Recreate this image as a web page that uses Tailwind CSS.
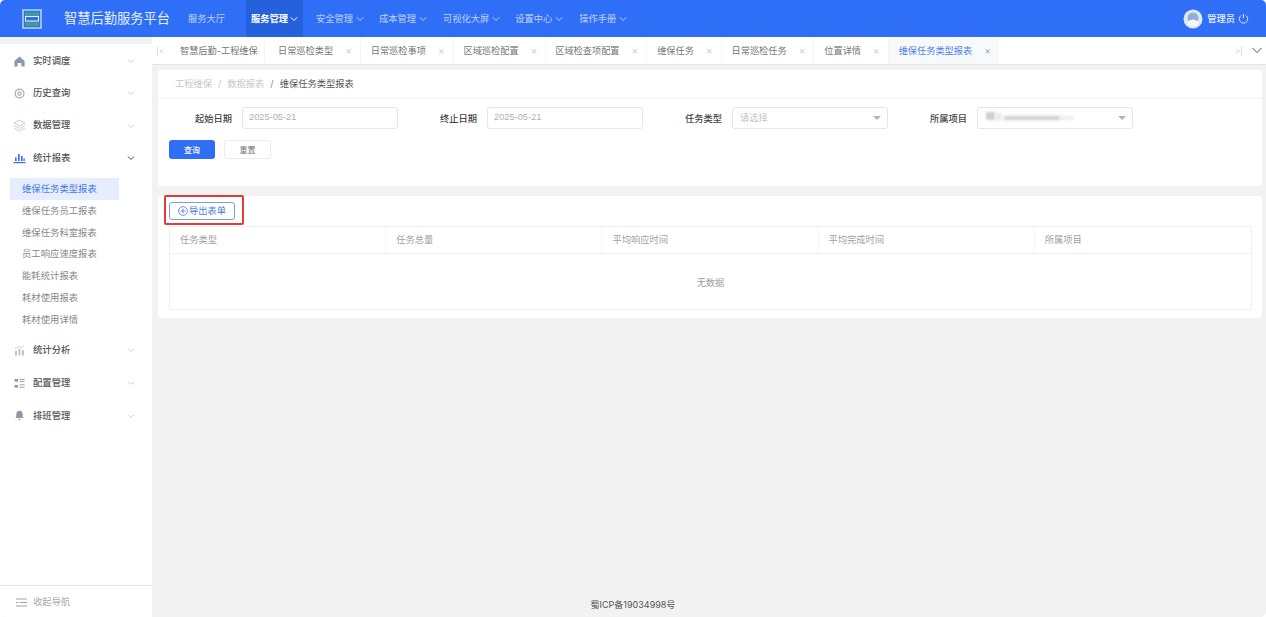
<!DOCTYPE html>
<html lang="en">
<head>
<meta charset="utf-8">
<title>维保任务类型报表</title>
<script src="https://cdn.jsdelivr.net/npm/@tailwindcss/browser@4"></script>
</head>
<body class="bg-white font-['Inter','Noto_Sans_CJK_SC',sans-serif] text-[#333]">
<div class="h-[617px] w-[1266px] overflow-hidden rounded-[5px] flex flex-col bg-[#f2f2f2] relative">

  <!-- top bar -->
  <header class="h-[37px] shrink-0 bg-[#2f6ef7] flex items-center text-white">
    <div class="w-[64px] flex justify-center">
      <svg width="20" height="20" viewBox="0 0 20 20" fill="none" class="ml-[-1px]">
        <rect x="1" y="1" width="18" height="18" stroke="#c9dcdc" stroke-width="1.4"/>
        <rect x="3" y="3" width="14" height="14" fill="#3f9a9a"/>
        <rect x="3.500" y="7.500" width="13" height="4.500" fill="#2f6ef7" stroke="#e8f0ff" stroke-width="1"/>
      </svg>
    </div>
    <div class="w-[124px] text-[13.25px] text-[#e6eeff]">智慧后勤服务平台</div>
    <nav class="flex items-center h-full text-[9.25px] text-white/70">
      <span class="w-[58px]">服务大厅</span>
      <span class="w-[57px] h-full bg-[#2560dd] flex items-center justify-center gap-[2px] font-bold text-white">服务管理
        <svg width="8" height="8" viewBox="0 0 8 8" fill="none" stroke="currentColor"><path d="M.8 2.300 4 5.500l3.200-3.200"/></svg>
      </span>
      <span class="flex items-center gap-[3px] ml-[13px]">安全管理
        <svg width="8" height="8" viewBox="0 0 8 8" fill="none" stroke="currentColor"><path d="M.8 2.300 4 5.500l3.200-3.200"/></svg>
      </span>
      <span class="flex items-center gap-[3px] ml-[15px]">成本管理
        <svg width="8" height="8" viewBox="0 0 8 8" fill="none" stroke="currentColor"><path d="M.8 2.300 4 5.500l3.200-3.200"/></svg>
      </span>
      <span class="flex items-center gap-[3px] ml-[16px]">可视化大屏
        <svg width="8" height="8" viewBox="0 0 8 8" fill="none" stroke="currentColor"><path d="M.8 2.300 4 5.500l3.200-3.200"/></svg>
      </span>
      <span class="flex items-center gap-[3px] ml-[15px]">设置中心
        <svg width="8" height="8" viewBox="0 0 8 8" fill="none" stroke="currentColor"><path d="M.8 2.300 4 5.500l3.200-3.200"/></svg>
      </span>
      <span class="flex items-center gap-[3px] ml-[16px]">操作手册
        <svg width="8" height="8" viewBox="0 0 8 8" fill="none" stroke="currentColor"><path d="M.8 2.300 4 5.500l3.200-3.200"/></svg>
      </span>
    </nav>
    <div class="ml-auto flex items-center pr-[17px]">
      <svg width="20" height="20" viewBox="0 0 20 20" class="mr-[4px]">
        <circle cx="10" cy="10" r="9.500" fill="#dfe8f5"/>
        <circle cx="10" cy="9" r="5.500" fill="#8fb0d8"/>
        <path d="M4 13q6-5 12 0l-2 4H6z" fill="#f4f7fb"/>
      </svg>
      <span class="text-[9.25px] text-white/90 font-medium">管理员</span>
      <svg width="11" height="11" viewBox="0 0 11 11" fill="none" stroke="#e6eeff" stroke-width=".9" class="ml-[3px]">
        <path d="M3.200 2.400a4.200 4.200 0 1 0 4.600 0M5.500 1v4"/>
      </svg>
    </div>
  </header>

  <div class="flex flex-1 min-h-0">
    <!-- side menu -->
    <aside class="w-[152px] shrink-0 flex flex-col mt-[7px] bg-white text-[9.35px]">
      <div class="flex-1 pt-[1px]">
        <div class="h-[32px] flex items-center pl-[14px] pr-[17px] font-medium text-[#555]">
          <svg width="11" height="11" viewBox="0 0 11 11" fill="#8d99a6" class="mr-[8px]"><path d="M5.500.6 10.600 5v5.400H7.400V7H3.600v3.400H.4V5z"/></svg>
          <span>实时调度</span>
          <svg width="8" height="8" viewBox="0 0 8 8" fill="none" stroke="#d4d4d4" class="ml-auto"><path d="M.8 2.600 4 5.400l3.200-2.800"/></svg>
        </div>
        <div class="h-[32px] flex items-center pl-[14px] pr-[17px] font-medium text-[#555]">
          <svg width="11" height="11" viewBox="0 0 11 11" fill="none" stroke="#a4aeb6" stroke-width="1.200" class="mr-[8px]"><circle cx="5.500" cy="5.500" r="4.400"/><circle cx="5.500" cy="5.500" r="1.600"/></svg>
          <span>历史查询</span>
          <svg width="8" height="8" viewBox="0 0 8 8" fill="none" stroke="#d4d4d4" class="ml-auto"><path d="M.8 2.600 4 5.400l3.200-2.800"/></svg>
        </div>
        <div class="h-[33px] flex items-center pl-[13px] pr-[17px] font-medium text-[#555]">
          <svg width="13" height="13" viewBox="0 0 13 13" fill="none" stroke="#bcc4ca" stroke-width=".8" class="mr-[7px]"><path d="M6.500 1 12 4 6.500 7 1 4zM1 6.500l5.500 3 5.500-3M1 9l5.500 3L12 9"/></svg>
          <span>数据管理</span>
          <svg width="8" height="8" viewBox="0 0 8 8" fill="none" stroke="#d4d4d4" class="ml-auto"><path d="M.8 2.600 4 5.400l3.200-2.800"/></svg>
        </div>
        <div class="h-[32px] flex items-center pl-[13px] pr-[17px] font-medium text-[#555]">
          <svg width="13" height="12" viewBox="0 0 13 12" fill="#2f6ef7" class="mr-[7px]"><rect x="0.500" y="10" width="12" height="1.200"/><rect x="2" y="5.500" width="1.600" height="3.500"/><rect x="5" y="2" width="1.600" height="7"/><rect x="8" y="4" width="1.600" height="5"/><rect x="10.400" y="6.500" width="1.400" height="2.500"/></svg>
          <span>统计报表</span>
          <svg width="8" height="8" viewBox="0 0 8 8" fill="none" stroke="#555" class="ml-auto"><path d="M.8 2.600 4 5.400l3.200-2.800"/></svg>
        </div>
        <ul class="text-[#888] mt-[4px]">
          <li class="h-[21.850px] ml-[10px] w-[109px] pl-[12px] flex items-center bg-[#e6eefd] text-[#3f78ee]">维保任务类型报表</li>
          <li class="h-[21.850px] pl-[22px] flex items-center">维保任务员工报表</li>
          <li class="h-[21.850px] pl-[22px] flex items-center">维保任务科室报表</li>
          <li class="h-[21.850px] pl-[22px] flex items-center">员工响应速度报表</li>
          <li class="h-[21.850px] pl-[22px] flex items-center">能耗统计报表</li>
          <li class="h-[21.850px] pl-[22px] flex items-center">耗材使用报表</li>
          <li class="h-[21.850px] pl-[22px] flex items-center">耗材使用详情</li>
        </ul>
        <div class="h-[33px] mt-[3px] flex items-center pl-[14px] pr-[17px] font-medium text-[#555]">
          <svg width="11" height="11" viewBox="0 0 11 11" fill="#bcc4ca" class="mr-[8px]"><rect x="1" y="6" width="2" height="4.500"/><rect x="4.500" y="4" width="2" height="6.500"/><rect x="8" y="5" width="2" height="5.500"/><path d="M1 4 4 2l3 .5L10 .6" fill="none" stroke="#bcc4ca" stroke-width=".7"/></svg>
          <span>统计分析</span>
          <svg width="8" height="8" viewBox="0 0 8 8" fill="none" stroke="#d4d4d4" class="ml-auto"><path d="M.8 2.600 4 5.400l3.200-2.800"/></svg>
        </div>
        <div class="h-[33px] flex items-center pl-[14px] pr-[17px] font-medium text-[#555]">
          <svg width="11" height="11" viewBox="0 0 11 11" fill="#8d99a6" class="mr-[8px]"><rect x=".5" y="1" width="3.500" height="2.600"/><rect x=".5" y="7" width="3.500" height="2.600"/><rect x="5.500" y="1" width="5" height=".9"/><rect x="5.500" y="3.200" width="5" height=".9"/><rect x="5.500" y="6.400" width="5" height=".9"/><rect x="5.500" y="8.800" width="5" height=".9"/></svg>
          <span>配置管理</span>
          <svg width="8" height="8" viewBox="0 0 8 8" fill="none" stroke="#d4d4d4" class="ml-auto"><path d="M.8 2.600 4 5.400l3.200-2.800"/></svg>
        </div>
        <div class="h-[32px] flex items-center pl-[14px] pr-[17px] font-medium text-[#555]">
          <svg width="11" height="11" viewBox="0 0 11 11" fill="#8d99a6" class="mr-[8px]"><path d="M5.500.8c2.200 0 3.200 1.600 3.200 3.600v2.400l1 1.200H1.300l1-1.200V4.400C2.300 2.400 3.300.8 5.500.8zM4.300 9h2.400l-.6 1.200H4.900z"/></svg>
          <span>排班管理</span>
          <svg width="8" height="8" viewBox="0 0 8 8" fill="none" stroke="#d4d4d4" class="ml-auto"><path d="M.8 2.600 4 5.400l3.200-2.800"/></svg>
        </div>
      </div>
      <div class="h-[32px] border-t border-[#e6e6e6] flex items-center pl-[16px] pt-[2px] text-[#aaa]">
        <svg width="11" height="9" viewBox="0 0 11 9" fill="none" stroke="#999" stroke-width=".9" class="mr-[6px]"><path d="M0 1h11M4 4.500h7M0 8h11M0 4.500h2.500"/></svg>
        <span>收起导航</span>
      </div>
    </aside>

    <div class="flex-1 min-w-0 flex flex-col">
      <!-- open tabs -->
      <div class="h-[28px] shrink-0 bg-white border-b border-[#e4e4e4] flex items-center text-[9.2px] text-[#777]">
        <span class="w-[16px] text-center text-[#ccc] text-[8px]">|&lt;</span>
        <div class="h-full flex items-center w-[97px] pl-[12px] border-r border-[#f5f5f5]">智慧后勤-工程维保</div>
        <div class="h-full flex items-center gap-[12px] pl-[13px] pr-[8px] border-r border-[#f5f5f5]">日常巡检类型<span class="text-[#ccc] text-[10px]">×</span></div>
        <div class="h-full flex items-center gap-[12px] pl-[10px] pr-[8px] border-r border-[#f5f5f5]">日常巡检事项<span class="text-[#ccc] text-[10px]">×</span></div>
        <div class="h-full flex items-center gap-[12px] pl-[10px] pr-[8px] border-r border-[#f5f5f5]">区域巡检配置<span class="text-[#ccc] text-[10px]">×</span></div>
        <div class="h-full flex items-center gap-[12px] pl-[9px] pr-[8px] border-r border-[#f5f5f5]">区域检查项配置<span class="text-[#ccc] text-[10px]">×</span></div>
        <div class="h-full flex items-center gap-[12px] pl-[10px] pr-[8px] border-r border-[#f5f5f5]">维保任务<span class="text-[#ccc] text-[10px]">×</span></div>
        <div class="h-full flex items-center gap-[12px] pl-[10px] pr-[8px] border-r border-[#f5f5f5]">日常巡检任务<span class="text-[#ccc] text-[10px]">×</span></div>
        <div class="h-full flex items-center gap-[12px] pl-[10px] pr-[8px] border-r border-[#f5f5f5]">位置详情<span class="text-[#ccc] text-[10px]">×</span></div>
        <div class="h-full flex items-center gap-[12px] pl-[10px] pr-[8px] bg-[#f8f9fb] text-[#4a80ee]">维保任务类型报表<span class="text-[#9ab] text-[10px]">×</span></div>
        <span class="ml-auto text-[#ccc] text-[8px] mr-[9px]">&gt;|</span>
        <svg width="10" height="7" viewBox="0 0 10 7" fill="none" stroke="#555" class="mr-[4px]"><path d="M.5 1 5 5.500 9.500 1"/></svg>
      </div>

      <main class="flex-1 min-h-0 flex flex-col pl-[6px] pr-[4px] pt-[5px]">
        <!-- query panel -->
        <section class="h-[116px] shrink-0 bg-white rounded-[2px]">
          <div class="h-[29px] pl-[17px] border-b border-[#f2f2f2] flex items-center gap-[6px] text-[9.25px] text-[#c8c8c8]">
            <span>工程维保</span><span>/</span><span>数据报表</span><span class="text-[#888]">/</span><span class="text-[#555]">维保任务类型报表</span>
          </div>
          <div class="grid grid-cols-[245px_245px_245px_245px] mt-[8px] text-[9.25px]">
            <div class="flex items-center">
              <label class="w-[84px] pr-[10px] pt-[2px] text-right text-[#444] font-medium">起始日期</label>
              <div class="w-[156px] h-[22px] border border-[#e2e5ea] rounded-[3px] pl-[6px] flex items-center text-[#b0b0b0] font-['Liberation_Sans']">2025-05-21</div>
            </div>
            <div class="flex items-center">
              <label class="w-[84px] pr-[10px] pt-[2px] text-right text-[#444] font-medium">终止日期</label>
              <div class="w-[156px] h-[22px] border border-[#e2e5ea] rounded-[3px] pl-[6px] flex items-center text-[#b0b0b0] font-['Liberation_Sans']">2025-05-21</div>
            </div>
            <div class="flex items-center">
              <label class="w-[84px] pr-[10px] pt-[2px] text-right text-[#444] font-medium">任务类型</label>
              <div class="w-[156px] h-[22px] border border-[#e2e5ea] rounded-[3px] pl-[7px] pr-[6px] flex items-center justify-between text-[#c4c4c4]">
                <span>请选择</span>
                <svg width="8" height="4" viewBox="0 0 8 4" fill="#b4b4b4"><path d="M0 0h8L4 4z"/></svg>
              </div>
            </div>
            <div class="flex items-center">
              <label class="w-[84px] pr-[10px] pt-[2px] text-right text-[#444] font-medium">所属项目</label>
              <div class="w-[156px] h-[22px] border border-[#e2e5ea] rounded-[3px] pl-[8px] pr-[6px] flex items-center justify-between">
                <span class="flex items-center">
                  <span class="w-[9px] h-[8px] mb-[4px] bg-[#cfcfcf] blur-[1px]"></span>
                  <span class="w-[7px] h-[8px] mb-[2px] bg-[#ececec] blur-[1px]"></span>
                  <span class="w-[56px] h-[4px] ml-[2px] bg-[#c9cdd1] blur-[1.5px]"></span>
                  <span class="w-[14px] h-[4px] bg-[#eeeeee] blur-[1px]"></span>
                </span>
                <svg width="8" height="4" viewBox="0 0 8 4" fill="#b4b4b4"><path d="M0 0h8L4 4z"/></svg>
              </div>
            </div>
          </div>
          <div class="flex gap-[9px] pl-[11px] mt-[11px] text-[8px]">
            <button class="w-[46px] h-[19px] rounded-[3px] bg-[#2f6ef7] text-white font-medium">查询</button>
            <button class="w-[47px] h-[19px] rounded-[3px] border border-[#ededed] bg-white text-[#777]">重置</button>
          </div>
        </section>

        <!-- result panel -->
        <section class="h-[122px] shrink-0 mt-[10px] bg-white rounded-[2px] pl-[11px] pr-[10px] relative">
          <button class="mt-[6px] w-[66px] h-[18px] border border-[#7da0d0] rounded-[3px] flex items-center justify-center gap-[1px] text-[9.25px] text-[#4a80ee]">
            <svg width="10" height="10" viewBox="0 0 10 10" fill="none" stroke="#4a7bd8" stroke-width=".8"><circle cx="5" cy="5" r="4.400"/><path d="M5 2.500v5M2.500 5h5"/></svg>
            导出表单
          </button>
          <div class="absolute left-[6px] top-[-1px] w-[80px] h-[30px] border-2 border-[#e03c3a] rounded-[2px]"></div>
          <div class="mt-[6px] border border-[#f0f0f0] h-[84px] text-[9.25px] text-[#a0a0a0]">
            <div class="grid grid-cols-5 h-[27px] border-b border-[#f0f0f0]">
              <div class="pl-[10px] flex items-center border-r border-[#f5f5f5]">任务类型</div>
              <div class="pl-[10px] flex items-center border-r border-[#f5f5f5]">任务总量</div>
              <div class="pl-[10px] flex items-center border-r border-[#f5f5f5]">平均响应时间</div>
              <div class="pl-[10px] flex items-center border-r border-[#f5f5f5]">平均完成时间</div>
              <div class="pl-[10px] flex items-center">所属项目</div>
            </div>
            <div class="h-[56px] pt-[2px] flex items-center justify-center">无数据</div>
          </div>
        </section>

        <footer class="mt-auto h-[24px] flex items-center justify-center pr-[154px] text-[9px] text-[#555]">蜀ICP备19034998号</footer>
      </main>
    </div>
  </div>
</div>
</body>
</html>
